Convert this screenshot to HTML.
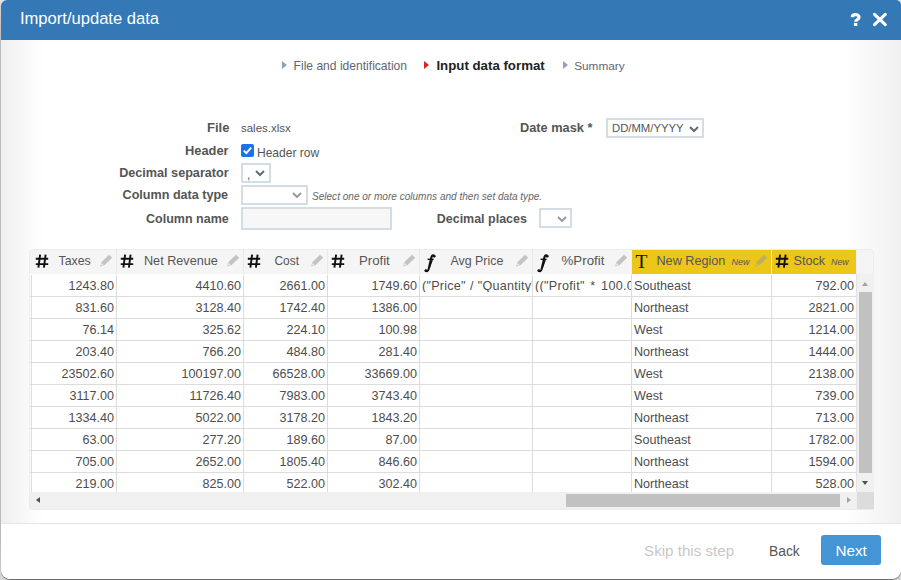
<!DOCTYPE html>
<html><head><meta charset="utf-8">
<style>
*{box-sizing:border-box;margin:0;padding:0}
html,body{width:901px;height:580px;overflow:hidden;background:linear-gradient(to bottom,#e4e4e4 0,#c6c6c6 40px,#c6c6c6 540px,#d8d8d8 580px);font-family:"Liberation Sans",sans-serif;color:#555}
.dlg{position:absolute;left:1px;top:0;width:900px;height:579px;background:#fff;border-radius:6px 5px 9px 9px;box-shadow:0 1px 1px rgba(0,0,0,.55);overflow:hidden}
.title{position:absolute;left:0;top:0;width:100%;height:40px;background:#3478b5;color:#fff}
.content{position:absolute;left:0;top:40px;width:100%;height:483px;background:linear-gradient(to right,#efefef 0,#fff 42px,#fff 845px,#f0f0f0 900px)}
.footer{position:absolute;left:0;top:523px;width:100%;height:56px;border-top:1px solid #e6e6e6;background:#fff}
.a{position:absolute;white-space:nowrap;line-height:1}
.lbl{font-weight:bold;font-size:12.7px;color:#555;text-align:right;width:200px}
.sel{position:absolute;border:2px solid #d3dde6;background:#fff}
.tri{position:absolute;width:0;height:0;border-top:4px solid transparent;border-bottom:4px solid transparent;border-left:5px solid #8ea3bb}
</style></head><body>
<div class="dlg">
 <div class="title"></div>
 <div class="content"></div>
 <div class="footer"></div>
</div>
<!-- title -->
<svg class="a" style="left:872px;top:12px" width="16" height="16" viewBox="0 0 16 16"><path d="M2.5 2.4L13.3 12.6M13.3 2.4L2.5 12.6" stroke="#fff" stroke-width="3.1" stroke-linecap="round"/></svg>
<svg class="a" style="left:850px;top:12px" width="12" height="15" viewBox="0 0 12 15"><path d="M2.3 5.2C2.3 1.8 9.1 1.8 9.1 5.2C9.1 7.6 5.6 7.6 5.6 9.8" stroke="#fff" stroke-width="3.1" fill="none"/><rect x="3.9" y="10.9" width="3.4" height="3" fill="#fff"/></svg>

<!-- steps -->
<div class="tri" style="left:281.5px;top:61px"></div>
<div class="tri" style="left:424px;top:61px;border-left-color:#d8232a"></div>
<div class="tri" style="left:562.5px;top:61px"></div>

<!-- form -->
<div class="a" style="left:241px;top:144px;width:13px;height:13px;background:#1a73e8;border-radius:2px"><svg width="13" height="13" viewBox="0 0 13 13" style="position:absolute;left:0;top:0"><path d="M2.8 6.6L5.3 9.1L10.2 3.6" stroke="#fff" stroke-width="1.9" fill="none"/></svg></div>
<div class="sel" style="left:241px;top:163px;width:30px;height:20px"><div class="a" style="left:4px;top:4px;font-size:12px;color:#555">,</div><svg class="a" style="left:11.8px;top:4.6px" width="10" height="7" viewBox="0 0 10 7"><path d="M1 1L5 5L9 1" stroke="#5f6b73" stroke-width="2" fill="none"/></svg></div>
<div class="sel" style="left:241px;top:185px;width:67px;height:20px"><svg class="a" style="left:48.8px;top:4.8px" width="10" height="7" viewBox="0 0 10 7"><path d="M1 1L5 5L9 1" stroke="#8d979e" stroke-width="1.8" fill="none"/></svg></div>
<div class="sel" style="left:241px;top:207px;width:151px;height:23px;background:#f7f7f7"></div>
<div class="sel" style="left:606px;top:118px;width:98px;height:20px"><svg class="a" style="left:80.5px;top:6px" width="10" height="7" viewBox="0 0 10 7"><path d="M1 1L5 5L9 1" stroke="#5f6b73" stroke-width="2" fill="none"/></svg></div>
<div class="sel" style="left:539px;top:208px;width:33px;height:20px"><svg class="a" style="left:15.5px;top:5.5px" width="10" height="7" viewBox="0 0 10 7"><path d="M1 1L5 5L9 1" stroke="#8d979e" stroke-width="1.8" fill="none"/></svg></div>

<!-- grid -->
<div class="a" style="left:29px;top:249px;width:845px;height:261px;background:#f5f5f5;border-radius:4px 4px 1px 3px;border:1px solid #ececec"></div>
<div class="a" style="left:31px;top:250px;width:85px;height:24px;background:#f5f5f5"></div>
<div class="a" style="left:117px;top:250px;width:126px;height:24px;background:#f5f5f5"></div>
<div class="a" style="left:244px;top:250px;width:83px;height:24px;background:#f5f5f5"></div>
<div class="a" style="left:328px;top:250px;width:91px;height:24px;background:#f5f5f5"></div>
<div class="a" style="left:420px;top:250px;width:112px;height:24px;background:#f5f5f5"></div>
<div class="a" style="left:533px;top:250px;width:98px;height:24px;background:#f5f5f5"></div>
<div class="a" style="left:632px;top:250px;width:139px;height:24px;background:#ecc719"></div>
<div class="a" style="left:772px;top:250px;width:84px;height:24px;background:#ecc719"></div>
<div class="a" style="left:116px;top:250px;width:1px;height:24px;background:#e9e9e9"></div>
<div class="a" style="left:243px;top:250px;width:1px;height:24px;background:#e9e9e9"></div>
<div class="a" style="left:327px;top:250px;width:1px;height:24px;background:#e9e9e9"></div>
<div class="a" style="left:419px;top:250px;width:1px;height:24px;background:#e9e9e9"></div>
<div class="a" style="left:532px;top:250px;width:1px;height:24px;background:#e9e9e9"></div>
<div class="a" style="left:631px;top:250px;width:1px;height:24px;background:#eef0f8"></div>
<div class="a" style="left:771px;top:250px;width:1px;height:24px;background:#f4ecd0"></div>
<div class="a" style="left:856px;top:250px;width:1px;height:24px;background:#eef0f8"></div>
<div class="a" style="left:30px;top:274px;width:826px;height:218px;background:#fff"></div>
<div class="a" style="left:31px;top:275px;width:1px;height:217px;background:#dcdcdc"></div>
<div class="a" style="left:116px;top:275px;width:1px;height:217px;background:#dcdcdc"></div>
<div class="a" style="left:243px;top:275px;width:1px;height:217px;background:#dcdcdc"></div>
<div class="a" style="left:327px;top:275px;width:1px;height:217px;background:#dcdcdc"></div>
<div class="a" style="left:419px;top:275px;width:1px;height:217px;background:#dcdcdc"></div>
<div class="a" style="left:532px;top:275px;width:1px;height:217px;background:#dcdcdc"></div>
<div class="a" style="left:631px;top:275px;width:1px;height:217px;background:#dcdcdc"></div>
<div class="a" style="left:771px;top:275px;width:1px;height:217px;background:#dcdcdc"></div>
<div class="a" style="left:30px;top:296px;width:826px;height:1px;background:#dcdcdc"></div>
<div class="a" style="left:30px;top:318px;width:826px;height:1px;background:#dcdcdc"></div>
<div class="a" style="left:30px;top:340px;width:826px;height:1px;background:#dcdcdc"></div>
<div class="a" style="left:30px;top:362px;width:826px;height:1px;background:#dcdcdc"></div>
<div class="a" style="left:30px;top:384px;width:826px;height:1px;background:#dcdcdc"></div>
<div class="a" style="left:30px;top:406px;width:826px;height:1px;background:#dcdcdc"></div>
<div class="a" style="left:30px;top:428px;width:826px;height:1px;background:#dcdcdc"></div>
<div class="a" style="left:30px;top:450px;width:826px;height:1px;background:#dcdcdc"></div>
<div class="a" style="left:30px;top:472px;width:826px;height:1px;background:#dcdcdc"></div>
<div class="a" style="left:35px;top:254px;width:14px;height:15px"><svg width="14" height="15" viewBox="0 0 14 15"><path d="M5.1 0.6L3.4 13.7M10.6 0.6L8.9 13.7M0.8 4.7H13.2M0.8 10.1H13.2" stroke="#111" stroke-width="1.9"/></svg></div>
<div class="a" style="left:99px;top:254px;width:14px;height:14px"><svg width="14" height="14" viewBox="0 0 14 14"><path fill-rule="evenodd" d="M10.04 0.74L13.16 3.86L5.66 11.06L1.1 12.6L2.54 7.94Z M2.1 11.5L4.5 10.7L2.9 9.1Z" fill="rgba(153,153,153,0.55)"/></svg></div>
<div class="a" style="left:120px;top:254px;width:14px;height:15px"><svg width="14" height="15" viewBox="0 0 14 15"><path d="M5.1 0.6L3.4 13.7M10.6 0.6L8.9 13.7M0.8 4.7H13.2M0.8 10.1H13.2" stroke="#111" stroke-width="1.9"/></svg></div>
<div class="a" style="left:226px;top:254px;width:14px;height:14px"><svg width="14" height="14" viewBox="0 0 14 14"><path fill-rule="evenodd" d="M10.04 0.74L13.16 3.86L5.66 11.06L1.1 12.6L2.54 7.94Z M2.1 11.5L4.5 10.7L2.9 9.1Z" fill="rgba(153,153,153,0.55)"/></svg></div>
<div class="a" style="left:247px;top:254px;width:14px;height:15px"><svg width="14" height="15" viewBox="0 0 14 15"><path d="M5.1 0.6L3.4 13.7M10.6 0.6L8.9 13.7M0.8 4.7H13.2M0.8 10.1H13.2" stroke="#111" stroke-width="1.9"/></svg></div>
<div class="a" style="left:310px;top:254px;width:14px;height:14px"><svg width="14" height="14" viewBox="0 0 14 14"><path fill-rule="evenodd" d="M10.04 0.74L13.16 3.86L5.66 11.06L1.1 12.6L2.54 7.94Z M2.1 11.5L4.5 10.7L2.9 9.1Z" fill="rgba(153,153,153,0.55)"/></svg></div>
<div class="a" style="left:331px;top:254px;width:14px;height:15px"><svg width="14" height="15" viewBox="0 0 14 15"><path d="M5.1 0.6L3.4 13.7M10.6 0.6L8.9 13.7M0.8 4.7H13.2M0.8 10.1H13.2" stroke="#111" stroke-width="1.9"/></svg></div>
<div class="a" style="left:402px;top:254px;width:14px;height:14px"><svg width="14" height="14" viewBox="0 0 14 14"><path fill-rule="evenodd" d="M10.04 0.74L13.16 3.86L5.66 11.06L1.1 12.6L2.54 7.94Z M2.1 11.5L4.5 10.7L2.9 9.1Z" fill="rgba(153,153,153,0.55)"/></svg></div>
<div class="a" style="left:424px;top:254px;width:13px;height:19px"><svg width="13" height="19" viewBox="0 0 13 19"><path d="M10.4 2.2C9.6 1 8.3 1 7.6 2.6L4.6 15.2C4 17.3 2.6 17.6 1.6 16.8" stroke="#111" stroke-width="2.1" fill="none" stroke-linecap="round"/><path d="M8.3 6L5.3 14" stroke="#111" stroke-width="1.2"/><circle cx="10.2" cy="2.3" r="1.25" fill="#111"/><circle cx="1.9" cy="16.6" r="1.3" fill="#111"/><path d="M3.6 5.3H9.6" stroke="#111" stroke-width="1.4"/></svg></div>
<div class="a" style="left:515px;top:254px;width:14px;height:14px"><svg width="14" height="14" viewBox="0 0 14 14"><path fill-rule="evenodd" d="M10.04 0.74L13.16 3.86L5.66 11.06L1.1 12.6L2.54 7.94Z M2.1 11.5L4.5 10.7L2.9 9.1Z" fill="rgba(153,153,153,0.55)"/></svg></div>
<div class="a" style="left:537px;top:254px;width:13px;height:19px"><svg width="13" height="19" viewBox="0 0 13 19"><path d="M10.4 2.2C9.6 1 8.3 1 7.6 2.6L4.6 15.2C4 17.3 2.6 17.6 1.6 16.8" stroke="#111" stroke-width="2.1" fill="none" stroke-linecap="round"/><path d="M8.3 6L5.3 14" stroke="#111" stroke-width="1.2"/><circle cx="10.2" cy="2.3" r="1.25" fill="#111"/><circle cx="1.9" cy="16.6" r="1.3" fill="#111"/><path d="M3.6 5.3H9.6" stroke="#111" stroke-width="1.4"/></svg></div>
<div class="a" style="left:614px;top:254px;width:14px;height:14px"><svg width="14" height="14" viewBox="0 0 14 14"><path fill-rule="evenodd" d="M10.04 0.74L13.16 3.86L5.66 11.06L1.1 12.6L2.54 7.94Z M2.1 11.5L4.5 10.7L2.9 9.1Z" fill="rgba(153,153,153,0.55)"/></svg></div>
<div class="a" style="left:635.5px;top:251.5px;font-family:'Liberation Serif',serif;font-size:19.6px;color:#111">T</div>
<div class="a" style="left:754px;top:254px;width:14px;height:14px"><svg width="14" height="14" viewBox="0 0 14 14"><path fill-rule="evenodd" d="M10.04 0.74L13.16 3.86L5.66 11.06L1.1 12.6L2.54 7.94Z M2.1 11.5L4.5 10.7L2.9 9.1Z" fill="rgba(153,153,153,0.55)"/></svg></div>
<div class="a" style="left:775px;top:254px;width:14px;height:15px"><svg width="14" height="15" viewBox="0 0 14 15"><path d="M5.1 0.6L3.4 13.7M10.6 0.6L8.9 13.7M0.8 4.7H13.2M0.8 10.1H13.2" stroke="#111" stroke-width="1.9"/></svg></div>
<div class="a" style="left:31px;top:279.6px;width:83px;text-align:right;font-size:12.6px;color:#4d4d4d">1243.80</div>
<div class="a" style="left:116px;top:279.6px;width:125px;text-align:right;font-size:12.6px;color:#4d4d4d">4410.60</div>
<div class="a" style="left:243px;top:279.6px;width:82px;text-align:right;font-size:12.6px;color:#4d4d4d">2661.00</div>
<div class="a" style="left:327px;top:279.6px;width:90px;text-align:right;font-size:12.6px;color:#4d4d4d">1749.60</div>
<div class="a" style="left:420px;top:279.6px;width:112px;overflow:hidden;padding-left:2px;font-size:12.6px;color:#4d4d4d;letter-spacing:0.25px;word-spacing:0.3px;">("Price" / "Quantity")</div>
<div class="a" style="left:533px;top:279.6px;width:98px;overflow:hidden;padding-left:2px;font-size:12.6px;color:#4d4d4d;letter-spacing:0.3px;word-spacing:1.8px;">(("Profit" * 100.0</div>
<div class="a" style="left:632px;top:279.6px;width:139px;overflow:hidden;padding-left:2px;font-size:12.6px;color:#4d4d4d;">Southeast</div>
<div class="a" style="left:771px;top:279.6px;width:83px;text-align:right;font-size:12.6px;color:#4d4d4d">792.00</div>
<div class="a" style="left:31px;top:301.6px;width:83px;text-align:right;font-size:12.6px;color:#4d4d4d">831.60</div>
<div class="a" style="left:116px;top:301.6px;width:125px;text-align:right;font-size:12.6px;color:#4d4d4d">3128.40</div>
<div class="a" style="left:243px;top:301.6px;width:82px;text-align:right;font-size:12.6px;color:#4d4d4d">1742.40</div>
<div class="a" style="left:327px;top:301.6px;width:90px;text-align:right;font-size:12.6px;color:#4d4d4d">1386.00</div>
<div class="a" style="left:632px;top:301.6px;width:139px;overflow:hidden;padding-left:2px;font-size:12.6px;color:#4d4d4d;">Northeast</div>
<div class="a" style="left:771px;top:301.6px;width:83px;text-align:right;font-size:12.6px;color:#4d4d4d">2821.00</div>
<div class="a" style="left:31px;top:323.6px;width:83px;text-align:right;font-size:12.6px;color:#4d4d4d">76.14</div>
<div class="a" style="left:116px;top:323.6px;width:125px;text-align:right;font-size:12.6px;color:#4d4d4d">325.62</div>
<div class="a" style="left:243px;top:323.6px;width:82px;text-align:right;font-size:12.6px;color:#4d4d4d">224.10</div>
<div class="a" style="left:327px;top:323.6px;width:90px;text-align:right;font-size:12.6px;color:#4d4d4d">100.98</div>
<div class="a" style="left:632px;top:323.6px;width:139px;overflow:hidden;padding-left:2px;font-size:12.6px;color:#4d4d4d;">West</div>
<div class="a" style="left:771px;top:323.6px;width:83px;text-align:right;font-size:12.6px;color:#4d4d4d">1214.00</div>
<div class="a" style="left:31px;top:345.6px;width:83px;text-align:right;font-size:12.6px;color:#4d4d4d">203.40</div>
<div class="a" style="left:116px;top:345.6px;width:125px;text-align:right;font-size:12.6px;color:#4d4d4d">766.20</div>
<div class="a" style="left:243px;top:345.6px;width:82px;text-align:right;font-size:12.6px;color:#4d4d4d">484.80</div>
<div class="a" style="left:327px;top:345.6px;width:90px;text-align:right;font-size:12.6px;color:#4d4d4d">281.40</div>
<div class="a" style="left:632px;top:345.6px;width:139px;overflow:hidden;padding-left:2px;font-size:12.6px;color:#4d4d4d;">Northeast</div>
<div class="a" style="left:771px;top:345.6px;width:83px;text-align:right;font-size:12.6px;color:#4d4d4d">1444.00</div>
<div class="a" style="left:31px;top:367.6px;width:83px;text-align:right;font-size:12.6px;color:#4d4d4d">23502.60</div>
<div class="a" style="left:116px;top:367.6px;width:125px;text-align:right;font-size:12.6px;color:#4d4d4d">100197.00</div>
<div class="a" style="left:243px;top:367.6px;width:82px;text-align:right;font-size:12.6px;color:#4d4d4d">66528.00</div>
<div class="a" style="left:327px;top:367.6px;width:90px;text-align:right;font-size:12.6px;color:#4d4d4d">33669.00</div>
<div class="a" style="left:632px;top:367.6px;width:139px;overflow:hidden;padding-left:2px;font-size:12.6px;color:#4d4d4d;">West</div>
<div class="a" style="left:771px;top:367.6px;width:83px;text-align:right;font-size:12.6px;color:#4d4d4d">2138.00</div>
<div class="a" style="left:31px;top:389.6px;width:83px;text-align:right;font-size:12.6px;color:#4d4d4d">3117.00</div>
<div class="a" style="left:116px;top:389.6px;width:125px;text-align:right;font-size:12.6px;color:#4d4d4d">11726.40</div>
<div class="a" style="left:243px;top:389.6px;width:82px;text-align:right;font-size:12.6px;color:#4d4d4d">7983.00</div>
<div class="a" style="left:327px;top:389.6px;width:90px;text-align:right;font-size:12.6px;color:#4d4d4d">3743.40</div>
<div class="a" style="left:632px;top:389.6px;width:139px;overflow:hidden;padding-left:2px;font-size:12.6px;color:#4d4d4d;">West</div>
<div class="a" style="left:771px;top:389.6px;width:83px;text-align:right;font-size:12.6px;color:#4d4d4d">739.00</div>
<div class="a" style="left:31px;top:411.6px;width:83px;text-align:right;font-size:12.6px;color:#4d4d4d">1334.40</div>
<div class="a" style="left:116px;top:411.6px;width:125px;text-align:right;font-size:12.6px;color:#4d4d4d">5022.00</div>
<div class="a" style="left:243px;top:411.6px;width:82px;text-align:right;font-size:12.6px;color:#4d4d4d">3178.20</div>
<div class="a" style="left:327px;top:411.6px;width:90px;text-align:right;font-size:12.6px;color:#4d4d4d">1843.20</div>
<div class="a" style="left:632px;top:411.6px;width:139px;overflow:hidden;padding-left:2px;font-size:12.6px;color:#4d4d4d;">Northeast</div>
<div class="a" style="left:771px;top:411.6px;width:83px;text-align:right;font-size:12.6px;color:#4d4d4d">713.00</div>
<div class="a" style="left:31px;top:433.6px;width:83px;text-align:right;font-size:12.6px;color:#4d4d4d">63.00</div>
<div class="a" style="left:116px;top:433.6px;width:125px;text-align:right;font-size:12.6px;color:#4d4d4d">277.20</div>
<div class="a" style="left:243px;top:433.6px;width:82px;text-align:right;font-size:12.6px;color:#4d4d4d">189.60</div>
<div class="a" style="left:327px;top:433.6px;width:90px;text-align:right;font-size:12.6px;color:#4d4d4d">87.00</div>
<div class="a" style="left:632px;top:433.6px;width:139px;overflow:hidden;padding-left:2px;font-size:12.6px;color:#4d4d4d;">Southeast</div>
<div class="a" style="left:771px;top:433.6px;width:83px;text-align:right;font-size:12.6px;color:#4d4d4d">1782.00</div>
<div class="a" style="left:31px;top:455.6px;width:83px;text-align:right;font-size:12.6px;color:#4d4d4d">705.00</div>
<div class="a" style="left:116px;top:455.6px;width:125px;text-align:right;font-size:12.6px;color:#4d4d4d">2652.00</div>
<div class="a" style="left:243px;top:455.6px;width:82px;text-align:right;font-size:12.6px;color:#4d4d4d">1805.40</div>
<div class="a" style="left:327px;top:455.6px;width:90px;text-align:right;font-size:12.6px;color:#4d4d4d">846.60</div>
<div class="a" style="left:632px;top:455.6px;width:139px;overflow:hidden;padding-left:2px;font-size:12.6px;color:#4d4d4d;">Northeast</div>
<div class="a" style="left:771px;top:455.6px;width:83px;text-align:right;font-size:12.6px;color:#4d4d4d">1594.00</div>
<div class="a" style="left:31px;top:477.6px;width:83px;text-align:right;font-size:12.6px;color:#4d4d4d">219.00</div>
<div class="a" style="left:116px;top:477.6px;width:125px;text-align:right;font-size:12.6px;color:#4d4d4d">825.00</div>
<div class="a" style="left:243px;top:477.6px;width:82px;text-align:right;font-size:12.6px;color:#4d4d4d">522.00</div>
<div class="a" style="left:327px;top:477.6px;width:90px;text-align:right;font-size:12.6px;color:#4d4d4d">302.40</div>
<div class="a" style="left:632px;top:477.6px;width:139px;overflow:hidden;padding-left:2px;font-size:12.6px;color:#4d4d4d;">Northeast</div>
<div class="a" style="left:771px;top:477.6px;width:83px;text-align:right;font-size:12.6px;color:#4d4d4d">528.00</div>
<div class="a" style="left:856px;top:274px;width:18px;height:218px;background:#f0f0f0;border-left:1px solid #e3e3e3"></div>
<div class="a" style="left:862px;top:282px;width:0;height:0;border-left:3.5px solid transparent;border-right:3.5px solid transparent;border-bottom:4px solid #a3a3a3"></div>
<div class="a" style="left:859px;top:292px;width:13px;height:181px;background:#c1c1c1"></div>
<div class="a" style="left:862px;top:481px;width:0;height:0;border-left:3.5px solid transparent;border-right:3.5px solid transparent;border-top:4px solid #505050"></div>
<div class="a" style="left:30px;top:492px;width:827px;height:17px;background:#f0f0f0;border-radius:0 0 0 3px"></div>
<div class="a" style="left:36px;top:497px;width:0;height:0;border-top:3.5px solid transparent;border-bottom:3.5px solid transparent;border-right:4px solid #505050"></div>
<div class="a" style="left:566px;top:494px;width:274px;height:13px;background:#c1c1c1"></div>
<div class="a" style="left:847px;top:497px;width:0;height:0;border-top:3.5px solid transparent;border-bottom:3.5px solid transparent;border-left:4px solid #a3a3a3"></div>
<div class="a" style="left:857px;top:492px;width:17px;height:17px;background:#dcdcdc"></div>
<!-- footer -->
<div class="a" style="left:821px;top:535px;width:60px;height:30px;background:#4594d6;border-radius:3px"></div>
<!-- texts -->
<div class="a" style="left:19.91px;top:10.5px;font-size:16.58px;color:#fff;">Import/update data</div>
<div class="a" style="left:293.58px;top:59.77px;font-size:12.09px;color:#5f6672;">File and identification</div>
<div class="a" style="left:436.40px;top:58.76px;font-size:13.28px;color:#222;font-weight:bold;">Input data format</div>
<div class="a" style="left:574.17px;top:61.0px;font-size:11.81px;color:#5f6672;">Summary</div>
<div class="a" style="left:207.00px;top:121.0px;font-size:13.00px;color:#555;font-weight:bold;">File</div>
<div class="a" style="left:241.00px;top:123.3px;font-size:11.46px;color:#555;">sales.xlsx</div>
<div class="a" style="left:185.00px;top:145.11px;font-size:12.86px;color:#555;font-weight:bold;">Header</div>
<div class="a" style="left:256.97px;top:146.8px;font-size:12.05px;color:#555;">Header row</div>
<div class="a" style="left:119.20px;top:167.3px;font-size:12.64px;color:#555;font-weight:bold;">Decimal separator</div>
<div class="a" style="left:122.60px;top:189.35px;font-size:12.58px;color:#555;font-weight:bold;">Column data type</div>
<div class="a" style="left:312.00px;top:192.48px;font-size:10.06px;color:#666;font-style:italic;">Select one or more columns and then set data type.</div>
<div class="a" style="left:146.00px;top:213.39px;font-size:12.53px;color:#555;font-weight:bold;">Column name</div>
<div class="a" style="left:520.00px;top:122.19px;font-size:12.77px;color:#555;font-weight:bold;">Date mask *</div>
<div class="a" style="left:436.78px;top:213.44px;font-size:12.48px;color:#555;font-weight:bold;">Decimal places</div>
<div class="a" style="left:612.00px;top:123.43px;font-size:11.30px;color:#555;">DD/MM/YYYY</div>
<div class="a" style="left:644.10px;top:543.18px;font-size:15.14px;color:#c8c8c8;">Skip this step</div>
<div class="a" style="left:769.02px;top:545.28px;font-size:13.85px;color:#555;">Back</div>
<div class="a" style="left:835.44px;top:543.06px;font-size:15.29px;color:#fff;">Next</div>
<div class="a" style="left:58.48px;top:254.56px;font-size:12.33px;color:#555;">Taxes</div>
<div class="a" style="left:143.98px;top:255.28px;font-size:12.66px;color:#555;">Net Revenue</div>
<div class="a" style="left:274.46px;top:255.9px;font-size:11.93px;color:#555;">Cost</div>
<div class="a" style="left:358.93px;top:253.81px;font-size:13.22px;color:#555;">Profit</div>
<div class="a" style="left:450.50px;top:254.5px;font-size:12.40px;color:#555;">Avg Price</div>
<div class="a" style="left:561.52px;top:253.72px;font-size:13.33px;color:#555;">%Profit</div>
<div class="a" style="left:656.47px;top:255.27px;font-size:12.67px;color:#555;">New Region</div>
<div class="a" style="left:731.42px;top:258.33px;font-size:9.06px;color:#555;font-style:italic;">New</div>
<div class="a" style="left:793.46px;top:255.27px;font-size:12.67px;color:#555;">Stock</div>
<div class="a" style="left:831.00px;top:257.51px;font-size:8.85px;color:#555;font-style:italic;">New</div>
</body></html>
